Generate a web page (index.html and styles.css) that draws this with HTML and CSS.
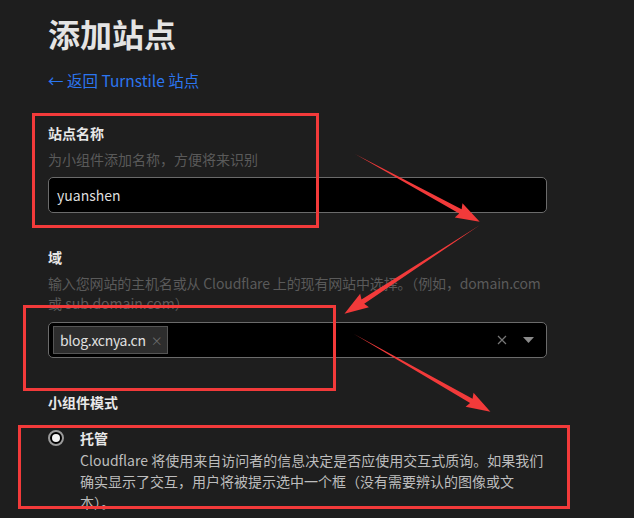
FILE: index.html
```html
<!DOCTYPE html>
<html lang="zh-CN">
<head>
    <meta charset="UTF-8">
    <meta name="viewport" content="width=device-width, initial-scale=1.0">
    <title>添加站点</title>
    <link rel="stylesheet" href="styles.css">
</head>
<body>
    <div class="page">
        <h1 class="title">添加站点</h1>
        <a class="back-link" href="#"><span class="back-arrow">←</span> 返回 Turnstile 站点</a>

        <!-- Site name -->
        <div class="field field-first">
            <div class="field-label">站点名称</div>
            <div class="field-hint">为小组件添加名称，方便将来识别</div>
            <div class="text-input">yuanshen</div>
        </div>

        <!-- Domain -->
        <div class="field">
            <div class="field-label">域</div>
            <div class="field-hint"><span class="hint-line">输入您网站的主机名或从 Cloudflare 上的现有网站中选择。（例如，domain.com</span><br>或 sub.domain.com）</div>
            <div class="select-input">
                <span class="tag">blog.xcnya.cn <span class="tag-close">×</span></span>
                <span class="select-spacer"></span>
                <svg class="clear-icon" width="10" height="10" viewBox="0 0 10 10">
                    <path d="M1 1 L9 9 M9 1 L1 9" stroke="#777" stroke-width="1.2" fill="none"/>
                </svg>
                <svg class="caret-icon" width="11" height="6" viewBox="0 0 11 6">
                    <path d="M0 0 L11 0 L5.5 6 Z" fill="#8a8a8a"/>
                </svg>
            </div>
        </div>

        <!-- Widget mode -->
        <div class="field">
            <div class="field-label">小组件模式</div>
            <div class="radio-row">
                <span class="radio"><span class="radio-dot"></span></span>
                <div class="radio-text">
                    <div class="radio-title">托管</div>
                    <div class="radio-desc">Cloudflare 将使用来自访问者的信息决定是否应使用交互式质询。如果我们确实显示了交互，用户将被提示选中一个框（没有需要辨认的图像或文本）。</div>
                </div>
            </div>
        </div>
    </div>

    <!-- Annotation overlay -->
    <svg class="annotations" width="634" height="518" viewBox="0 0 634 518">
        <g fill="none" stroke="#f23a3a" stroke-width="3">
            <rect x="33.5" y="114.5" width="284" height="112"/>
            <rect x="24.5" y="306.5" width="310" height="83"/>
            <rect x="19.5" y="426.5" width="549" height="81"/>
        </g>
        <g fill="#f23a3a">
            <polygon transform="translate(355 154) rotate(28.55)" points="0,0 120,-2.5 118,-8 142,0 118,8 120,2.5"/>
            <polygon transform="translate(480 225) rotate(146.8)" points="0,0 140,-2.5 138,-8 162,0 138,8 140,2.5"/>
            <polygon transform="translate(354 334) rotate(29.66)" points="0,0 135,-2.5 133,-8 157,0 133,8 135,2.5"/>
        </g>
    </svg>
</body>
</html>
```

FILE: styles.css
```css
/* General Styles */
body {
    margin: 0;
    padding: 0;
    background: #1e1e1e;
    font-family: "Noto Sans CJK SC", "Noto Sans", sans-serif;
    color: #e6e6e6;
    overflow: hidden;
}

.page {
    width: 499px;
    padding: 13px 0 0 48px;
}

.title {
    margin: 0;
    font-size: 32px;
    line-height: 40px;
    font-weight: 700;
    color: #e4e4e4;
}

.back-link {
    display: block;
    margin-top: 17px;
    font-size: 15.5px;
    line-height: 20px;
    color: #2c76f0;
    text-decoration: none;
}

/* Fields */
.field {
    margin-top: 34px;
}

.field-first {
    margin-top: 33px;
}

.field-label {
    font-size: 14px;
    line-height: 20px;
    font-weight: 700;
    color: #e8e8e8;
}

.field-hint {
    margin-top: 6px;
    font-size: 14px;
    line-height: 20px;
    color: #5a5a5a;
}

.hint-line {
    white-space: nowrap;
    letter-spacing: -0.15px;
}

.text-input {
    margin-top: 8px;
    height: 34px;
    border: 1px solid #6b6b6b;
    border-radius: 5px;
    background: #000;
    padding: 0 8px;
    font-size: 14px;
    line-height: 34px;
    color: #dedede;
}

.select-input {
    margin-top: 9px;
    height: 34px;
    border: 1px solid #6b6b6b;
    border-radius: 5px;
    background: #000;
    display: flex;
    align-items: center;
    padding: 0 12px 0 4px;
}

.tag {
    height: 26px;
    display: flex;
    align-items: center;
    gap: 5px;
    padding: 0 5px 0 6px;
    background: #2d2d2d;
    border: 1px solid #555;
    font-size: 14px;
    letter-spacing: -0.3px;
    color: #e0e0e0;
}

.tag-close {
    font-size: 12px;
    color: #6a6a6a;
}

.select-spacer {
    flex: 1;
}

.clear-icon {
    margin-right: 16px;
}

/* Radio */
.radio-row {
    margin-top: 16px;
    display: flex;
    gap: 16px;
}

.radio {
    flex: none;
    width: 12px;
    height: 12px;
    margin-top: 2px;
    border: 2px solid #9a9a9a;
    border-radius: 50%;
    background: #000;
    display: flex;
    align-items: center;
    justify-content: center;
}

.radio-dot {
    width: 8px;
    height: 8px;
    border-radius: 50%;
    background: #f2f2f2;
}

.radio-title {
    font-size: 14px;
    line-height: 20px;
    font-weight: 700;
    color: #e8e8e8;
}

.radio-desc {
    margin-top: 2px;
    font-size: 14px;
    line-height: 21px;
    color: #bdbdbd;
}

/* Annotation overlay */
.annotations {
    position: absolute;
    top: 0;
    left: 0;
    pointer-events: none;
}
```
